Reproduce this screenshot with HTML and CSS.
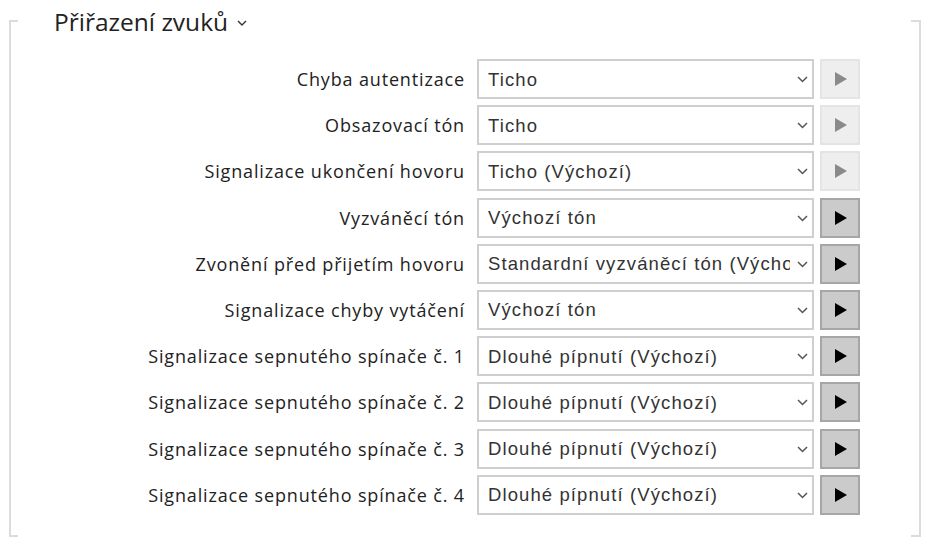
FILE: index.html
```html
<!DOCTYPE html>
<html lang="cs">
<head>
<meta charset="utf-8">
<title>Přiřazení zvuků</title>
<link rel="stylesheet" href="styles.css">
</head>
<body>
<section class="panel">
  <h2 class="panel-title">Přiřazení zvuků <svg class="title-caret" width="10" height="6" viewBox="0 0 10 6"><path d="M1 1 L5 5 L9 1" fill="none" stroke="#333" stroke-width="1.4"/></svg></h2>
  <div class="rows">
    <label class="row-label">Chyba autentizace</label>
    <div class="select-wrap"><select class="sound-select"><option>Ticho</option></select><svg class="caret" width="11" height="7" viewBox="0 0 11 7"><path d="M1 1 L5.5 5.5 L10 1" fill="none" stroke="#555" stroke-width="1.5"/></svg></div>
    <button class="play-btn" disabled><svg width="12" height="14" viewBox="0 0 12 14"><path d="M0 0 L12 7 L0 14 Z"/></svg></button>

    <label class="row-label">Obsazovací tón</label>
    <div class="select-wrap"><select class="sound-select"><option>Ticho</option></select><svg class="caret" width="11" height="7" viewBox="0 0 11 7"><path d="M1 1 L5.5 5.5 L10 1" fill="none" stroke="#555" stroke-width="1.5"/></svg></div>
    <button class="play-btn" disabled><svg width="12" height="14" viewBox="0 0 12 14"><path d="M0 0 L12 7 L0 14 Z"/></svg></button>

    <label class="row-label">Signalizace ukončení hovoru</label>
    <div class="select-wrap"><select class="sound-select"><option>Ticho (Výchozí)</option></select><svg class="caret" width="11" height="7" viewBox="0 0 11 7"><path d="M1 1 L5.5 5.5 L10 1" fill="none" stroke="#555" stroke-width="1.5"/></svg></div>
    <button class="play-btn" disabled><svg width="12" height="14" viewBox="0 0 12 14"><path d="M0 0 L12 7 L0 14 Z"/></svg></button>

    <label class="row-label">Vyzváněcí tón</label>
    <div class="select-wrap"><select class="sound-select"><option>Výchozí tón</option></select><svg class="caret" width="11" height="7" viewBox="0 0 11 7"><path d="M1 1 L5.5 5.5 L10 1" fill="none" stroke="#555" stroke-width="1.5"/></svg></div>
    <button class="play-btn"><svg width="12" height="14" viewBox="0 0 12 14"><path d="M0 0 L12 7 L0 14 Z"/></svg></button>

    <label class="row-label">Zvonění před přijetím hovoru</label>
    <div class="select-wrap"><select class="sound-select"><option>Standardní vyzváněcí tón (Výchozí)</option></select><svg class="caret" width="11" height="7" viewBox="0 0 11 7"><path d="M1 1 L5.5 5.5 L10 1" fill="none" stroke="#555" stroke-width="1.5"/></svg></div>
    <button class="play-btn"><svg width="12" height="14" viewBox="0 0 12 14"><path d="M0 0 L12 7 L0 14 Z"/></svg></button>

    <label class="row-label">Signalizace chyby vytáčení</label>
    <div class="select-wrap"><select class="sound-select"><option>Výchozí tón</option></select><svg class="caret" width="11" height="7" viewBox="0 0 11 7"><path d="M1 1 L5.5 5.5 L10 1" fill="none" stroke="#555" stroke-width="1.5"/></svg></div>
    <button class="play-btn"><svg width="12" height="14" viewBox="0 0 12 14"><path d="M0 0 L12 7 L0 14 Z"/></svg></button>

    <label class="row-label">Signalizace sepnutého spínače č. 1</label>
    <div class="select-wrap"><select class="sound-select"><option>Dlouhé pípnutí (Výchozí)</option></select><svg class="caret" width="11" height="7" viewBox="0 0 11 7"><path d="M1 1 L5.5 5.5 L10 1" fill="none" stroke="#555" stroke-width="1.5"/></svg></div>
    <button class="play-btn"><svg width="12" height="14" viewBox="0 0 12 14"><path d="M0 0 L12 7 L0 14 Z"/></svg></button>

    <label class="row-label">Signalizace sepnutého spínače č. 2</label>
    <div class="select-wrap"><select class="sound-select"><option>Dlouhé pípnutí (Výchozí)</option></select><svg class="caret" width="11" height="7" viewBox="0 0 11 7"><path d="M1 1 L5.5 5.5 L10 1" fill="none" stroke="#555" stroke-width="1.5"/></svg></div>
    <button class="play-btn"><svg width="12" height="14" viewBox="0 0 12 14"><path d="M0 0 L12 7 L0 14 Z"/></svg></button>

    <label class="row-label">Signalizace sepnutého spínače č. 3</label>
    <div class="select-wrap"><select class="sound-select"><option>Dlouhé pípnutí (Výchozí)</option></select><svg class="caret" width="11" height="7" viewBox="0 0 11 7"><path d="M1 1 L5.5 5.5 L10 1" fill="none" stroke="#555" stroke-width="1.5"/></svg></div>
    <button class="play-btn"><svg width="12" height="14" viewBox="0 0 12 14"><path d="M0 0 L12 7 L0 14 Z"/></svg></button>

    <label class="row-label">Signalizace sepnutého spínače č. 4</label>
    <div class="select-wrap"><select class="sound-select"><option>Dlouhé pípnutí (Výchozí)</option></select><svg class="caret" width="11" height="7" viewBox="0 0 11 7"><path d="M1 1 L5.5 5.5 L10 1" fill="none" stroke="#555" stroke-width="1.5"/></svg></div>
    <button class="play-btn"><svg width="12" height="14" viewBox="0 0 12 14"><path d="M0 0 L12 7 L0 14 Z"/></svg></button>
  </div>
</section>
</body>
</html>
```
FILE: styles.css
```css
html, body {
  margin: 0;
  padding: 0;
  background: #fff;
}

.panel {
  position: relative;
  width: 912px;
  height: 537px;
  margin-left: 9px;
  box-sizing: border-box;
}

/* side rules of the frame */
.panel::before {
  content: "";
  position: absolute;
  top: 20px;
  bottom: 0;
  left: 0;
  right: 0;
  border-left: 2px solid #dcdcdc;
  border-right: 2px solid #dcdcdc;
}

/* short corner ticks of the frame */
.panel::after {
  content: "";
  position: absolute;
  top: 20px;
  bottom: 0;
  left: 0;
  right: 0;
  background:
    linear-gradient(#dcdcdc, #dcdcdc) left top / 9px 2px no-repeat,
    linear-gradient(#dcdcdc, #dcdcdc) right top / 10px 2px no-repeat,
    linear-gradient(#dcdcdc, #dcdcdc) left bottom / 9px 2px no-repeat,
    linear-gradient(#dcdcdc, #dcdcdc) right bottom / 10px 2px no-repeat;
}

.panel-title {
  margin: 0 0 0 45px;
  padding-top: 5px;
  font-family: "Open Sans", sans-serif;
  font-weight: 400;
  font-size: 24.5px;
  line-height: 34px;
  color: #222;
  display: flex;
  align-items: center;
  gap: 9px;
}

.title-caret {
  margin-top: 2px;
}

.rows {
  margin-top: 20px;
  display: grid;
  grid-template-columns: 455px 350px 46px;
  row-gap: 6.2px;
  align-items: center;
}

.row-label {
  text-align: right;
  font-family: "Open Sans", sans-serif;
  font-size: 18px;
  letter-spacing: 0.85px;
  color: #222;
  white-space: nowrap;
  margin-right: -1px;
}

.select-wrap {
  position: relative;
  margin-left: 13px;
  height: 40px;
}

.sound-select {
  appearance: none;
  -webkit-appearance: none;
  width: 337px;
  height: 40px;
  margin: 0;
  box-sizing: border-box;
  border: 2px solid #cfcfcf;
  border-radius: 0;
  background: #fff;
  padding: 0 22px 0 9px;
  font-family: "Liberation Sans", Arial, sans-serif;
  font-size: 18.5px;
  letter-spacing: 1.1px;
  color: #333;
  outline: none;
}

.caret {
  position: absolute;
  right: 6px;
  top: 17px;
  pointer-events: none;
}

.play-btn {
  justify-self: end;
  width: 40px;
  height: 40px;
  margin: 0;
  padding: 0;
  box-sizing: border-box;
  border: 2px solid #a6a6a6;
  background: #cbcbcb;
  display: flex;
  align-items: center;
  justify-content: center;
}

.play-btn svg {
  fill: #000;
  margin-left: 2px;
}

.play-btn:disabled {
  border-color: #e4e4e4;
  background: #eeeeee;
}

.play-btn:disabled svg {
  fill: #8a8a8a;
}
```
